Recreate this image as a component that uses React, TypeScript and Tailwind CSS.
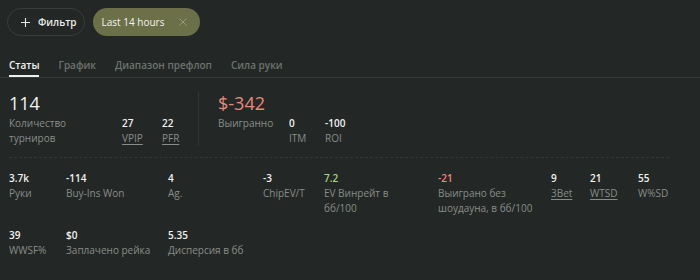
import React from "react";

type Stat = { value: string; label: string; tone?: "red" | "green"; link?: boolean; wrap?: string };

const grid: Stat[] = [
  { value: "3.7k", label: "Руки" },
  { value: "-114", label: "Buy-Ins Won" },
  { value: "4", label: "Ag." },
  { value: "-3", label: "ChipEV/T" },
  { value: "7.2", label: "EV Винрейт в бб/100", tone: "green", wrap: "max-w-[90px]" },
  { value: "-21", label: "Выиграно без шоудауна, в бб/100", tone: "red", wrap: "max-w-[100px]" },
  { value: "9", label: "3Bet", link: true },
  { value: "21", label: "WTSD", link: true },
  { value: "55", label: "W%SD" },
  { value: "39", label: "WWSF%" },
  { value: "$0", label: "Заплачено рейка" },
  { value: "5.35", label: "Дисперсия в бб" },
];

const tabs = ["Статы", "График", "Диапазон префлоп", "Сила руки"];

const valueCls = "text-[10px] leading-[15px] font-semibold";
const labelCls = "text-[10px] leading-[15px] text-[#898d8a]";
const linkCls = "underline underline-offset-[2px] decoration-[#898d8a]";

const SmallStat: React.FC<{ s: Stat }> = ({ s }) => (
  <div className="flex flex-col">
    <span
      className={`${valueCls} ${
        s.tone === "red" ? "text-[#e5897a]" : s.tone === "green" ? "text-[#a6d67c]" : "text-[#f1f2f1]"
      }`}
    >
      {s.value}
    </span>
    <span className={`${s.wrap ?? ""} ${labelCls} ${s.link ? linkCls : ""}`}>{s.label}</span>
  </div>
);

export default function App() {
  return (
    <div
      className="w-[700px] h-[280px] bg-[#232725] text-white overflow-hidden"
      style={{ fontFamily: '"Open Sans", "Noto Sans", sans-serif' }}
    >
      <div className="flex items-center gap-[8px] px-[7px] pt-[8px]">
        <button className="flex h-[28px] items-center gap-[8px] rounded-full border border-[#393d3a] pl-[13px] pr-[7px] text-[10px] font-semibold text-[#eceeec]">
          <svg width="9" height="9" viewBox="0 0 9 9" fill="none" stroke="#e6e8e6" strokeWidth="1.1">
            <path d="M4.5 0v9M0 4.5h9" />
          </svg>
          Фильтр
        </button>
        <div className="flex h-[28px] items-center gap-[15px] rounded-full bg-[#6b7049] pl-[9px] pr-[13px] text-[10px] text-[#f4f4ef]">
          Last 14 hours
          <svg width="8" height="8" viewBox="0 0 8 8" fill="none" stroke="#969a78" strokeWidth="1">
            <path d="M0.5 0.5l7 7M7.5 0.5l-7 7" />
          </svg>
        </div>
      </div>

      <div className="mt-[22px] flex gap-[19px] border-b border-[#363a37] px-[9px]">
        {tabs.map((t, i) => (
          <div
            key={t}
            className={`pb-[2px] text-[10px] font-semibold leading-[15px] ${
              i === 0 ? "border-b-2 border-[#eef0ee] text-[#f2f3f2]" : "border-b-2 border-transparent text-[#6f7370]"
            }`}
          >
            {t}
          </div>
        ))}
      </div>

      <div className="px-[9px]">
        <div className="flex pt-[14px] pb-[11px]">
          <div className="flex w-[189px] items-end">
            <div className="flex w-[113px] flex-col">
              <span className="text-[18px] leading-[22px] text-[#f2f3f2]">114</span>
              <span className={`mt-[2px] ${labelCls}`}>
                Количество
                <br />
                турниров
              </span>
            </div>
            <div className="flex w-[40px] flex-col">
              <span className={`${valueCls} text-[#f1f2f1]`}>27</span>
              <span className={`${labelCls} ${linkCls}`}>VPIP</span>
            </div>
            <div className="flex flex-col">
              <span className={`${valueCls} text-[#f1f2f1]`}>22</span>
              <span className={`${labelCls} ${linkCls}`}>PFR</span>
            </div>
          </div>
          <div className="w-px bg-[#323633]" />
          <div className="ml-[19px] flex items-start">
            <div className="flex w-[71px] flex-col">
              <span className="text-[18px] leading-[22px] text-[#e5897a]">$-342</span>
              <span className={`mt-[2px] ${labelCls}`}>Выигранно</span>
            </div>
            <div className="mt-[24px] flex w-[36px] flex-col">
              <span className={`${valueCls} text-[#f1f2f1]`}>0</span>
              <span className={labelCls}>ITM</span>
            </div>
            <div className="mt-[24px] flex flex-col">
              <span className={`${valueCls} text-[#f1f2f1]`}>-100</span>
              <span className={labelCls}>ROI</span>
            </div>
          </div>
        </div>

        <div className="w-[660px] border-t border-dashed border-[#343835]" />

        <div className="grid grid-cols-[57px_102px_95px_61px_114px_113px_39px_48px_1fr] gap-y-[12px] pt-[13px]">
          {grid.map((s) => (
            <SmallStat key={s.label} s={s} />
          ))}
        </div>
      </div>
    </div>
  );
}
